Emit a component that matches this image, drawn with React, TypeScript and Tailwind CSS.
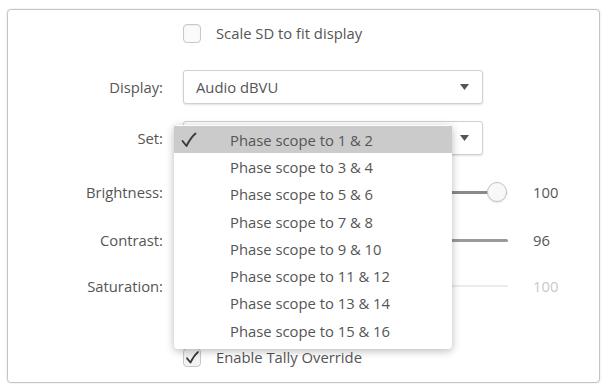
import React from "react";

const font = { fontFamily: '"Open Sans", "Noto Sans", sans-serif' };

function Arrow() {
  return (
    <svg width="9" height="6" viewBox="0 0 9 6" className="block">
      <path d="M0 0 L9 0 L4.5 6 Z" fill="#555" />
    </svg>
  );
}

function Check({ size = 18, w = 1.9 }: { size?: number; w?: number }) {
  return (
    <svg width={size} height={size} viewBox="0 0 18 18" className="block">
      <path d="M2.5 10 L6.5 15 C9 10 12 5.5 15.5 2.5" fill="none" stroke="#3a3a3a" strokeWidth={w} strokeLinecap="round" strokeLinejoin="round" />
    </svg>
  );
}

const items = [
  "Phase scope to 1 & 2",
  "Phase scope to 3 & 4",
  "Phase scope to 5 & 6",
  "Phase scope to 7 & 8",
  "Phase scope to 9 & 10",
  "Phase scope to 11 & 12",
  "Phase scope to 13 & 14",
  "Phase scope to 15 & 16",
];

export default function App() {
  return (
    <div className="w-[603px] h-[384px] bg-white overflow-hidden pt-[9px] pl-[7px] text-[14.8px] leading-[20px] text-[#555]" style={font}>
      <div className="relative w-[593px] h-[374px] border border-[#c4c4c4] rounded-[4px] shadow-[0_0_2px_rgba(0,0,0,0.15)] bg-white">
        <div className="flex flex-col">
          {/* Scale SD */}
          <div className="mt-[13px] h-[20px] flex items-center pl-[175px]">
            <div className="w-[18px] h-[19px] rounded-[4px] border border-[#c8c8c8] bg-[#fafafa] shadow-[inset_0_1px_1px_rgba(0,0,0,0.05)]" />
            <span className="ml-[15px]">Scale SD to fit display</span>
          </div>
          {/* Display */}
          <div className="mt-[27px] h-[34px] flex items-center">
            <div className="w-[155px] text-right">Display:</div>
            <div className="ml-[20px] w-[300px] h-[34px] rounded-[3px] border border-[#d0d0d0] bg-white shadow-[0_1px_2px_rgba(0,0,0,0.12)] flex items-center justify-between pl-[12px] pr-[13px]">
              <span>Audio dBVU</span>
              <Arrow />
            </div>
          </div>
          {/* Set */}
          <div className="mt-[17px] h-[34px] flex items-center">
            <div className="w-[155px] text-right">Set:</div>
            <div className="ml-[20px] w-[300px] h-[34px] rounded-[3px] border border-[#d0d0d0] bg-white shadow-[0_1px_2px_rgba(0,0,0,0.12)] flex items-center justify-end pr-[13px]">
              <Arrow />
            </div>
          </div>
          {/* Brightness */}
          <div className="mt-[27px] h-[20px] flex items-center">
            <div className="w-[155px] text-right">Brightness:</div>
            <div className="ml-[20px] w-[324px] h-[20px] relative flex items-center">
              <div className="w-full h-[3px] bg-[#8a8a8a] rounded-full" />
              <div className="absolute right-0 top-0 w-[20px] h-[20px] rounded-full border border-[#c4c4c4] bg-[#f8f8f8] shadow-[0_1px_2px_rgba(0,0,0,0.12)]" />
            </div>
            <span className="ml-[26px]">100</span>
          </div>
          {/* Contrast */}
          <div className="mt-[28px] h-[20px] flex items-center">
            <div className="w-[155px] text-right">Contrast:</div>
            <div className="ml-[20px] w-[325px] h-[20px] flex items-center">
              <div className="w-full h-[3px] bg-[#9a9a9a] rounded-full" />
            </div>
            <span className="ml-[25px]">96</span>
          </div>
          {/* Saturation */}
          <div className="mt-[26px] h-[20px] flex items-center">
            <div className="w-[155px] text-right">Saturation:</div>
            <div className="ml-[20px] w-[325px] h-[20px] flex items-center">
              <div className="w-full h-[2px] bg-[#ececec] rounded-full" />
            </div>
            <span className="ml-[25px] text-[#c8c8c8]">100</span>
          </div>
          {/* Tally */}
          <div className="mt-[51px] h-[20px] flex items-center pl-[175px]">
            <div className="w-[18px] h-[19px] rounded-[4px] border border-[#c8c8c8] bg-[#f3f3f3] flex items-center justify-center">
              <Check size={15} w={2.2} />
            </div>
            <span className="ml-[15px]">Enable Tally Override</span>
          </div>
        </div>

        {/* Dropdown menu overlay */}
        <div className="absolute left-[166px] top-[115px] w-[278px] pt-[1px] pb-[5px] bg-white rounded-[4px] shadow-[0_2px_9px_rgba(0,0,0,0.28)]">
          {items.map((t, i) => (
            <div
              key={t}
              className={`h-[27.3px] flex items-center relative ${i === 0 ? "bg-[#cbcbcb]" : ""}`}
            >
              {i === 0 && (
                <div className="absolute left-[6px] top-[5px]">
                  <Check size={18} />
                </div>
              )}
              <span className="pl-[56px]">{t}</span>
            </div>
          ))}
        </div>
      </div>
    </div>
  );
}
